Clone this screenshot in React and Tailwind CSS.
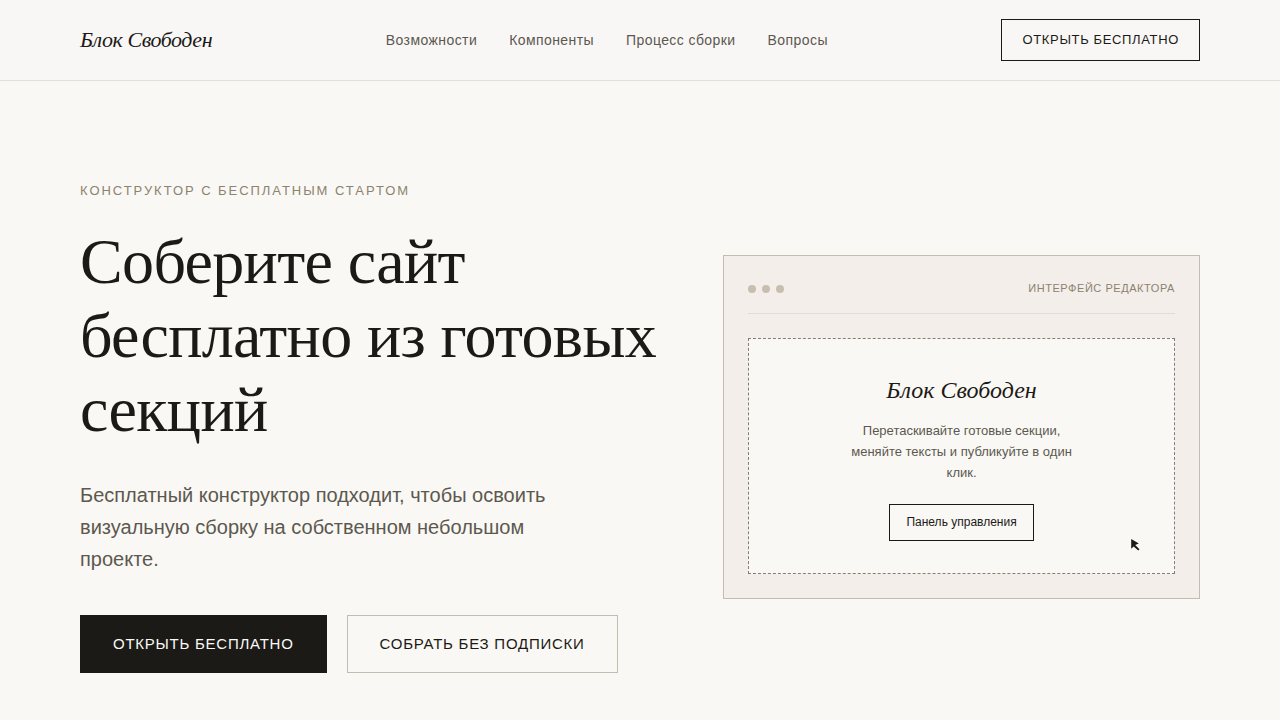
import React from 'react';

const navLinks = [
    { href: '#features', label: 'Возможности' },
    { href: '#components', label: 'Компоненты' },
    { href: '#process', label: 'Процесс сборки' },
    { href: '#faq', label: 'Вопросы' },
];

const Header = () => (
    <header className="bg-[#f9f7f6] border-b border-[#e2dfd8]">
        <div className="flex items-center justify-between h-20 px-20">
            <a href="#top" className="font-['Liberation_Serif',serif] italic text-[22px] leading-9 tracking-[-0.02em]">
                Блок Свободен
            </a>
            <nav className="flex items-center gap-8">
                {navLinks.map((link) => (
                    <a key={link.href} href={link.href} className="text-sm tracking-[0.03em] text-[#5c5850]">
                        {link.label}
                    </a>
                ))}
            </nav>
            <button type="button" className="border border-[#1c1a16] px-5 py-2.5 text-[13px] leading-5 tracking-wider uppercase">
                Открыть бесплатно
            </button>
        </div>
    </header>
);

const EditorPreview = () => (
    <div className="bg-[#f4eeea] border border-[#c4bcae] p-6">
        <div className="flex items-center justify-between pb-4 mb-6 border-b border-[#e2dcd6]">
            <div className="flex gap-1.5">
                <span className="size-2 rounded-full bg-[#c8beb0]" />
                <span className="size-2 rounded-full bg-[#c8beb0]" />
                <span className="size-2 rounded-full bg-[#c8beb0]" />
            </div>
            <span className="text-[11px] leading-[17px] tracking-wider uppercase text-[#8c8270]">
                Интерфейс редактора
            </span>
        </div>
        <div className="relative flex flex-col items-center bg-[#faf8f4] border border-dashed border-[#857d74] p-8 text-center">
            <h2 className="font-['Liberation_Serif',serif] italic text-2xl leading-[38px] mb-[11px]">Блок Свободен</h2>
            <p className="max-w-60 mb-[21px] text-[13px] leading-[21px] text-[#5c5850]">
                Перетаскивайте готовые секции, меняйте тексты и публикуйте в один клик.
            </p>
            <button type="button" className="border border-[#1c1a16] px-4 py-2 text-xs leading-[19px]">
                Панель управления
            </button>
            <svg className="absolute right-8 bottom-5 size-4" viewBox="0 0 16 16" aria-hidden="true">
                <path d="M5.2 2V11.8L7.7 9.4L12.2 13.4L13.5 12.3L9.2 8L12.8 6.4Z" fill="#1c1a16" />
            </svg>
        </div>
    </div>
);

const Hero = () => (
    <section className="grid grid-cols-[17fr_14fr] items-center gap-16 px-20 py-25">
        <div>
            <p className="mb-6 text-[13px] leading-5 tracking-[0.15em] uppercase text-[#8c8270]">
                Конструктор с бесплатным стартом
            </p>
            <h1 className="mb-8 font-['Liberation_Serif',serif] text-[64px] leading-[74px] tracking-[-0.01em]">
                Соберите сайт бесплатно из готовых секций
            </h1>
            <p className="max-w-[480px] mb-10 text-xl leading-8 text-[#5c5850]">
                Бесплатный конструктор подходит, чтобы освоить визуальную сборку на собственном небольшом проекте.
            </p>
            <div className="flex gap-5">
                <button type="button" className="bg-[#1c1a16] border border-[#1c1a16] px-8 py-4 text-[15px] leading-6 tracking-wider uppercase text-[#faf8f4]">
                    Открыть бесплатно
                </button>
                <button type="button" className="border border-[#c4bcae] px-8 py-4 text-[15px] leading-6 tracking-wider uppercase">
                    Собрать без подписки
                </button>
            </div>
        </div>
        <EditorPreview />
    </section>
);

export default function App() {
    return (
        <div id="top" className="min-h-screen bg-[#faf8f4] text-[#1c1a16] font-['Liberation_Sans',sans-serif]">
            <Header />
            <main>
                <Hero />
            </main>
        </div>
    );
}
